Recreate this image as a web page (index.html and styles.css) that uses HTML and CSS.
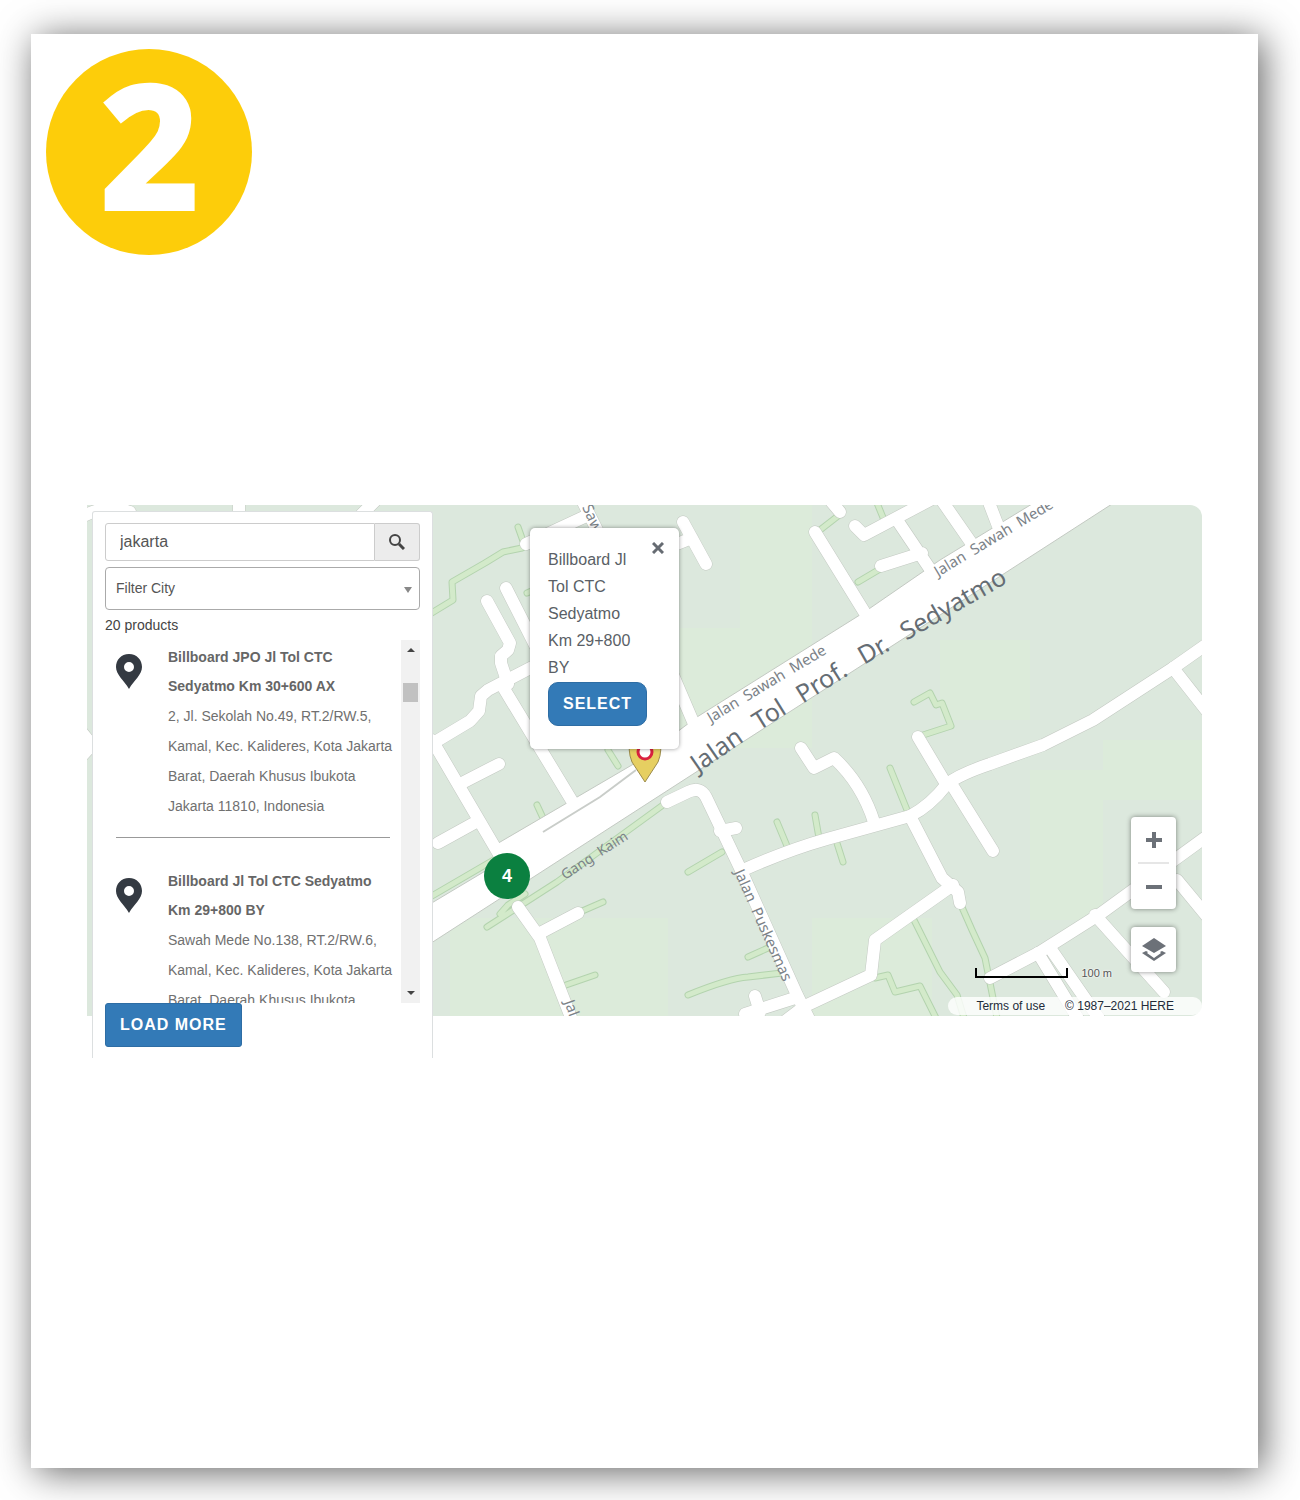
FILE: index.html
```html
<!DOCTYPE html>
<html lang="en">
<head>
  <meta charset="UTF-8">
  <meta name="viewport" content="width=device-width, initial-scale=1.0">
  <title>Billboard Map</title>
  <link rel="stylesheet" href="styles.css">
</head>
<body>
  <main class="card">
    <div class="step">2</div>

    <section class="map">
      <svg class="map-canvas" viewBox="87 505 1115 511" preserveAspectRatio="xMinYMin slice" aria-hidden="true">
        <defs>
          <!-- footpaths -->
          <g id="paths">
            <path d="M425 617L453 600L452 582L485 563L503 552L522 548"/>
            <path d="M518 527L523 541M527 593L536 589M537 805L543 818M608 750L618 766M425 900L540 833"/>
            <path d="M487 927L557 882L663 805M500 914L508 905L525 894M603 902L580 912M595 975L566 985"/>
            <path d="M688 872L722 852M777 822L787 846M815 815L819 838M836 840L843 862M890 768L907 810"/>
            <path d="M748 957L768 948M688 995Q730 978 748 977L782 973"/>
            <path d="M914 920L940 972L957 995L964 1018M875 978L888 975L895 992L920 986L936 1018"/>
            <path d="M961 905L972 930L985 958L997 1018M914 702L930 693L936 705L942 703L951 726L920 736"/>
            <path d="M877 503L884 520M820 530L838 516M858 582L880 569"/>
          </g>
          <!-- streets -->
          <g id="streets">
            <path d="M425 748L470 721L479 711L481 696L488 690L540 663"/>
            <path d="M506 588L540 655M487 601L510 643L508 650L501 656L501 663L508 684"/>
            <path d="M503 687L575 806M432 740L500 856M499 764L460 784M438 843L476 822"/>
            <path d="M582 500L600 536M526 544L584 517M683 522L706 564M672 546L692 538M670 668L694 724"/>
            <path d="M815 532L868 618M830 500L840 512M855 526L864 535L932 499M897 520L932 572M881 566L922 553"/>
            <path d="M938 495L972 544M988 500L998 526M801 748L814 768L834 758Q862 784 874 822"/>
            <path d="M918 737L946 784M952 785L993 851M910 816L942 878L958 892L960 903"/>
            <path d="M953 885L875 940L871 975L805 1006L780 1025"/>
            <path d="M667 802L688 792Q700 786 706 797L740 868L797 995L812 1025"/>
            <path d="M736 828L720 831M755 996L760 1012M745 1014L795 998"/>
            <path d="M518 907L540 938L572 1020M578 913L540 933"/>
            <path d="M743 870Q788 850 827 839L910 816Q930 806 947 784Q960 774 990 764L1043 745L1093 720L1173 668L1210 642"/>
            <path d="M1173 668L1210 715M990 978L1040 952L1100 914L1210 834M1095 915L1164 992M1177 880L1210 920"/>
            <path d="M1038 953L1080 1022M1050 948L1100 1020"/>
            <path d="M80 518Q105 503 130 512M239 500V516M378 498L360 516M80 730L92 745L80 758"/>
          </g>
        </defs>

        <rect class="land" x="87" y="505" width="1115" height="511"/>
        <path class="park" d="M740 505h72v123h-72zM680 628h132v120H680zM940 640h90v80h-90zM1103 740h99v60h-99zM1030 770h73v150h-73zM450 918h218v98H450zM812 918h120v98H812z"/>

        <use href="#paths" class="path-edge"/>
        <use href="#paths" class="path-fill"/>
        <use href="#streets" class="street-edge"/>
        <path class="toll" d="M425 907L497 864L495 845L637 762L697 717L863 613L940 560L1032 504H1112L940 615L850 673L690 776L425 947Z"/>
        <use href="#streets" class="street-fill"/>
        <path class="divider-line" d="M543 832L600 797L636 770"/>

        <!-- street names -->
        <path id="l1" class="guide" d="M698 773L762 729L871 661L1021 575"/>
        <text class="name-big"><textPath href="#l1">Jalan<tspan dx="11"> Tol</tspan><tspan dx="11"> Prof.</tspan><tspan dx="11"> Dr.</tspan><tspan dx="11"> Sedyatmo</tspan></textPath></text>
        <text class="name" transform="translate(711 723) rotate(-31)">Jalan<tspan dx="4"> Sawah</tspan><tspan dx="4"> Mede</tspan></text>
        <text class="name" transform="translate(938 577) rotate(-31)">Jalan<tspan dx="4"> Sawah</tspan><tspan dx="4"> Mede</tspan></text>
        <text class="name name-small" transform="translate(565 880) rotate(-33)">Gang<tspan dx="4"> Kaim</tspan></text>
        <text class="name" transform="translate(734 872) rotate(66)">Jalan<tspan dx="4"> Puskesmas</tspan></text>
        <text class="name" transform="translate(564 1002) rotate(70)">Jalan</text>
        <text class="name" transform="translate(582 507) rotate(66)">Sawah</text>

        <!-- selected billboard -->
        <path class="marker" d="M645 782L632 762Q627 750 631 738H659Q663 750 658 762Z"/>
        <circle class="marker-dot" cx="645" cy="752" r="7"/>
      </svg>

      <div class="cluster">4</div>

      <div class="popup">
        <button class="popup-close" aria-label="Close">
          <svg width="12" height="12" viewBox="0 0 12 12"><path d="M1 1L11 11M11 1L1 11"/></svg>
        </button>
        <p>Billboard Jl<br>Tol CTC<br>Sedyatmo<br>Km 29+800<br>BY</p>
        <button class="btn btn-select">SELECT</button>
      </div>

      <div class="controls">
        <div class="control-box">
          <button aria-label="Zoom in"><svg width="16" height="16" viewBox="0 0 16 16"><path d="M6 0h4v6h6v4h-6v6H6v-6H0V6h6z"/></svg></button>
          <button aria-label="Zoom out"><svg width="16" height="16" viewBox="0 0 16 16"><path d="M0 6h16v4H0z"/></svg></button>
        </div>
        <div class="control-box">
          <button aria-label="Layers"><svg width="24" height="24" viewBox="0 0 24 24"><path d="M12 0L24 8L12 15L0 8ZM0 15L4 13L6 14L5 15L12 20L19 15L18 14L20 13L24 15L12 23Z"/></svg></button>
        </div>
      </div>

      <div class="scale"><span class="scale-bar"></span>100 m</div>
      <div class="legal"><a href="#">Terms of use</a><span>© 1987–2021 HERE</span></div>

      <aside class="panel">
        <form class="search">
          <input type="text" value="jakarta" aria-label="Search">
          <button type="button" aria-label="Search">
            <svg width="16" height="16" viewBox="0 0 16 16"><circle cx="6" cy="6" r="5"/><path class="handle" d="M10 10L15 15"/></svg>
          </button>
        </form>
        <div class="filter">
          <select aria-label="Filter City">
            <option>Filter City</option>
          </select>
          <svg width="8" height="6" viewBox="0 0 8 6"><path d="M0 0H8L4 6Z"/></svg>
        </div>
        <p class="count">20 products</p>

        <div class="list">
          <ul>
            <li>
              <svg class="pin" width="26" height="35" viewBox="0 0 26 35"><path fill-rule="evenodd" d="M13 0C5 0 0 6 0 13C0 21 8 26 13 35C18 26 26 21 26 13C26 6 21 0 13 0ZM13 8A5 5 0 1 1 13 18A5 5 0 1 1 13 8Z"/></svg>
              <div>
                <h3>Billboard JPO Jl Tol CTC<br>Sedyatmo Km 30+600 AX</h3>
                <p>2, Jl. Sekolah No.49, RT.2/RW.5,<br>Kamal, Kec. Kalideres, Kota Jakarta<br>Barat, Daerah Khusus Ibukota<br>Jakarta 11810, Indonesia</p>
              </div>
            </li>
            <li>
              <svg class="pin" width="26" height="35" viewBox="0 0 26 35"><path fill-rule="evenodd" d="M13 0C5 0 0 6 0 13C0 21 8 26 13 35C18 26 26 21 26 13C26 6 21 0 13 0ZM13 8A5 5 0 1 1 13 18A5 5 0 1 1 13 8Z"/></svg>
              <div>
                <h3>Billboard Jl Tol CTC Sedyatmo<br>Km 29+800 BY</h3>
                <p>Sawah Mede No.138, RT.2/RW.6,<br>Kamal, Kec. Kalideres, Kota Jakarta<br>Barat, Daerah Khusus Ibukota</p>
              </div>
            </li>
          </ul>
          <div class="scrollbar">
            <svg width="8" height="4" viewBox="0 0 8 4"><path d="M0 4L4 0L8 4Z"/></svg>
            <span class="thumb"></span>
            <svg width="8" height="4" viewBox="0 0 8 4"><path d="M0 0L4 4L8 0Z"/></svg>
          </div>
        </div>
        <button class="btn">LOAD MORE</button>
      </aside>
    </section>
  </main>
</body>
</html>
```

FILE: styles.css
```css
* {
  box-sizing: border-box;
}
body {
  margin: 0;
  padding: 34px 42px 32px 31px;
  min-height: 100vh;
  display: flex;
  background: #fff;
  font-family: "Liberation Sans", Arial, sans-serif;
  color: #555;
}
h3, p, ul {
  margin: 0;
  padding: 0;
}
button {
  font-family: inherit;
  cursor: pointer;
}
.card {
  flex: 1;
  padding: 15px;
  background: #fff;
  box-shadow: 5px 4px 36px rgba(0, 0, 0, 0.62);
}
.step {
  display: flex;
  align-items: center;
  justify-content: center;
  width: 206px;
  height: 206px;
  padding-bottom: 18px;
  border-radius: 50%;
  background: #fdcd0a;
  color: #fff;
  font-family: "Open Sans", "Noto Sans", sans-serif;
  font-size: 168px;
  font-weight: bold;
  line-height: 188px;
  -webkit-text-stroke: 6px #fff;
  stroke-linejoin: round;
}

/* map */
.map {
  position: relative;
  height: 511px;
  margin: 250px 41px 0;
}
.map-canvas {
  display: block;
  width: 100%;
  height: 100%;
  border-radius: 0 12px 12px 0;
}
.land {
  fill: #dce8dd;
}
.park {
  fill: #dcebda;
}
.path-edge, .path-fill, .street-edge, .street-fill {
  fill: none;
  stroke-linecap: round;
  stroke-linejoin: round;
}
.path-edge {
  stroke: #b3d3ae;
  stroke-width: 7;
}
.path-fill {
  stroke: #d3eaca;
  stroke-width: 5;
}
.street-edge {
  stroke: #c3c9c2;
  stroke-width: 13;
}
.street-fill {
  stroke: #fff;
  stroke-width: 12;
}
.toll {
  fill: #fff;
  stroke: #c3c9c2;
  stroke-width: 1;
}
.divider-line {
  fill: none;
  stroke: #c9cdc9;
  stroke-width: 2;
}
.guide {
  fill: none;
}
.name, .name-big {
  font-family: "Noto Sans", sans-serif;
  font-size: 15px;
  fill: #7b8288;
}
.name-small {
  font-size: 14px;
}
.name-big {
  font-size: 25px;
  fill: #656d74;
}
.marker {
  fill: #e6cf61;
  stroke: #9c8c4c;
}
.marker-dot {
  fill: #fff;
  stroke: #d9213f;
  stroke-width: 3;
}
.cluster {
  position: absolute;
  left: 397px;
  top: 348px;
  width: 46px;
  height: 46px;
  border-radius: 50%;
  background: #0b8040;
  color: #fff;
  font-size: 18px;
  font-weight: bold;
  line-height: 46px;
  text-align: center;
}

/* popup */
.popup {
  position: absolute;
  left: 443px;
  top: 23px;
  width: 149px;
  padding: 18px 18px 23px;
  border-radius: 5px;
  background: #fff;
  box-shadow: 0 0 4px rgba(0, 0, 0, 0.4);
}
.popup p {
  margin-bottom: 1px;
  font-size: 16px;
  line-height: 27px;
  color: #5a5f66;
}
.popup-close {
  position: absolute;
  right: 12px;
  top: 11px;
  width: 18px;
  height: 18px;
  padding: 3px;
  border: 0;
  background: none;
}
.popup-close svg {
  display: block;
  stroke: #666b72;
  stroke-width: 3;
}
.btn {
  display: block;
  height: 44px;
  padding: 0 14px;
  border: 1px solid #2e6da4;
  border-radius: 3px;
  background: #337ab7;
  color: #fff;
  font-size: 16px;
  font-weight: bold;
  letter-spacing: 1px;
}
.btn-select {
  border-radius: 10px;
}

/* map controls */
.controls {
  position: absolute;
  right: 26px;
  bottom: 44px;
  display: flex;
  flex-direction: column;
  gap: 18px;
}
.control-box {
  width: 45px;
  border-radius: 4px;
  background: #fff;
  box-shadow: 0 0 5px rgba(0, 0, 0, 0.45);
}
.control-box button {
  display: flex;
  align-items: center;
  justify-content: center;
  width: 45px;
  height: 45px;
  padding: 0;
  border: 0;
  background: none;
}
.control-box button + button {
  width: 31px;
  height: 47px;
  margin: 0 7px;
  border-top: 2px solid #e6e6e6;
}
.control-box svg {
  fill: #6c7178;
}
.scale {
  position: absolute;
  right: 90px;
  bottom: 35px;
  display: flex;
  align-items: center;
  gap: 13px;
  font-size: 11px;
  line-height: 16px;
  text-shadow: 0 0 2px #fff, 0 0 2px #fff;
}
.scale-bar {
  width: 93px;
  height: 10px;
  border: 2px solid #000;
  border-top: 0;
}
.legal {
  position: absolute;
  right: 0;
  bottom: 1px;
  display: flex;
  gap: 20px;
  padding: 0 28px;
  border-radius: 9px;
  background: rgba(255, 255, 255, 0.8);
  font-size: 12px;
  line-height: 18px;
  color: #222b38;
}
.legal a {
  color: inherit;
  text-decoration: none;
}

/* search panel */
.panel {
  position: absolute;
  left: 5px;
  top: 6px;
  width: 341px;
  padding: 11px 12px;
  border: 1px solid #dcdfe0;
  border-bottom: 0;
  border-radius: 3px 3px 0 0;
  background: #fff;
}
.search {
  display: flex;
  height: 38px;
  margin-bottom: 6px;
}
.search input {
  flex: 1;
  min-width: 0;
  padding: 0 14px;
  border: 1px solid #ccc;
  border-radius: 3px 0 0 3px;
  font-family: inherit;
  font-size: 16px;
  color: #555;
}
.search button {
  display: flex;
  align-items: center;
  justify-content: center;
  width: 45px;
  padding: 0;
  border: 1px solid #ccc;
  border-left: 0;
  border-radius: 0 3px 3px 0;
  background: #ececec;
}
.search svg {
  fill: none;
  stroke: #444;
  stroke-width: 2;
}
.search .handle {
  stroke-width: 3;
}
.filter {
  position: relative;
}
.filter select {
  display: block;
  width: 100%;
  height: 43px;
  padding: 0 10px 2px;
  border: 1px solid #aaa;
  border-radius: 4px;
  background: #fff;
  appearance: none;
  font-family: inherit;
  font-size: 14px;
  color: #555;
}
.filter svg {
  position: absolute;
  right: 8px;
  top: 20px;
  fill: #888;
}
.count {
  font-size: 14px;
  line-height: 30px;
  color: #444;
}
.list {
  display: flex;
  height: 363px;
}
.list ul {
  flex: 1;
  padding: 3px 11px 0;
  overflow: hidden;
  list-style: none;
}
.list li {
  display: flex;
  gap: 26px;
  margin-bottom: 29px;
  padding-bottom: 16px;
  border-bottom: 1px solid #999;
  white-space: nowrap;
}
.list .pin {
  flex: none;
  margin-top: 11px;
  fill: #343a42;
}
.list h3 {
  font-size: 14px;
  line-height: 29px;
  color: #666;
}
.list p {
  font-size: 14px;
  line-height: 30px;
  color: #707070;
}
.scrollbar {
  display: flex;
  flex-direction: column;
  align-items: center;
  width: 19px;
  padding: 8px 0;
  background: #f1f1f1;
}
.scrollbar svg {
  fill: #444;
}
.thumb {
  width: 15px;
  height: 19px;
  margin: 31px 0 auto;
  background: #c1c1c1;
}
```
